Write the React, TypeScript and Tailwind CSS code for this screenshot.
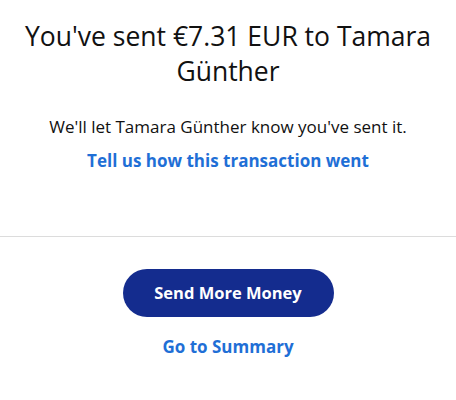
export default function App() {
  return (
    <div className="w-[456px] h-[400px] bg-white font-['Open_Sans',sans-serif] text-[#111]">
      <div className="px-3 pt-[19px] text-center">
        <h1 className="text-[26.5px] leading-[35px] font-normal">You've sent €7.31 EUR to Tamara Günther</h1>
        <p className="mt-[27px] text-[17px] leading-[22px]">We'll let Tamara Günther know you've sent it.</p>
        <a className="mt-[12px] block text-[17px] leading-[22px] font-bold text-[#1f6fd6]">Tell us how this transaction went</a>
      </div>
      <div className="mt-[64px] h-px bg-[#dcdcdc]" />
      <div className="flex flex-col items-center pt-[32px]">
        <button className="w-[211px] h-[48px] rounded-full bg-[#142c8e] text-white text-[16.5px] font-bold">Send More Money</button>
        <a className="mt-[17px] text-[17px] font-bold text-[#1f6fd6]">Go to Summary</a>
      </div>
    </div>
  );
}
